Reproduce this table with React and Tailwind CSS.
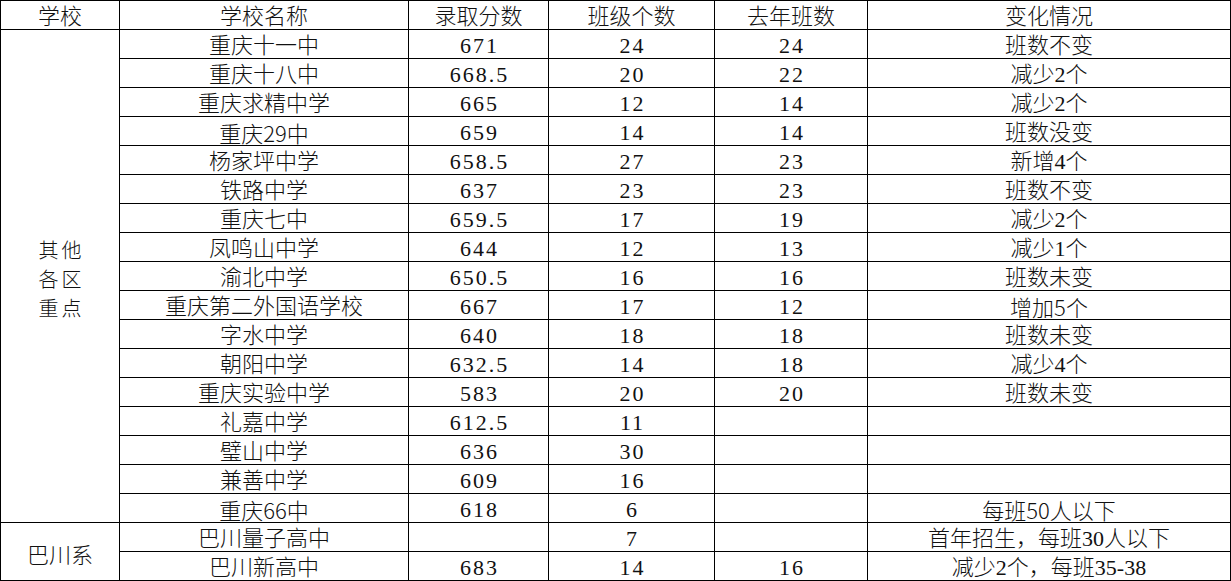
import React from "react";

const S = ({ children }) => <span className="font-['Noto_Sans_CJK_SC',sans-serif]">{children}</span>;

const rows = [
  ["重庆十一中", "671", "24", "24", "班数不变"],
  ["重庆十八中", "668.5", "20", "22", "减少2个"],
  ["重庆求精中学", "665", "12", "14", "减少2个"],
  [<>重庆<S>29</S>中</>, "659", "14", "14", "班数没变"],
  ["杨家坪中学", "658.5", "27", "23", "新增4个"],
  ["铁路中学", "637", "23", "23", "班数不变"],
  ["重庆七中", "659.5", "17", "19", "减少2个"],
  ["凤鸣山中学", "644", "12", "13", "减少1个"],
  ["渝北中学", "650.5", "16", "16", "班数未变"],
  ["重庆第二外国语学校", "667", "17", "12", <>增加<S>5</S>个</>],
  ["字水中学", "640", "18", "18", "班数未变"],
  ["朝阳中学", "632.5", "14", "18", "减少4个"],
  ["重庆实验中学", "583", "20", "20", "班数未变"],
  ["礼嘉中学", "612.5", "11", "", ""],
  ["璧山中学", "636", "30", "", ""],
  ["兼善中学", "609", "16", "", ""],
  [<>重庆<S>66</S>中</>, "618", "6", "", <>每班<S>50</S>人以下</>],
];

const bachuan = [
  ["巴川量子高中", "", "7", "", "首年招生，每班30人以下"],
  ["巴川新高中", "683", "14", "16", "减少2个，每班35-38"],
];

function Cell({ children, num = false }) {
  return (
    <div
      className={
        "bg-white flex justify-center items-start pt-[3px] leading-[25px] whitespace-nowrap " +
        (num ? "font-['Liberation_Serif',serif] tracking-[2px] pl-[2px]" : "")
      }
    >
      <span>{children}</span>
    </div>
  );
}

export default function App() {
  const header = ["学校", "学校名称", "录取分数", "班级个数", "去年班数", "变化情况"];
  return (
    <div className="w-[1231px] h-[581px] bg-white">
      <div className="grid grid-cols-[118px_288px_139px_165px_152px_362px] auto-rows-[28px] gap-px p-px bg-black text-[#111] text-[22px] font-light font-['Liberation_Serif','Noto_Sans_CJK_SC',serif]">
        {header.map((h, i) => (
          <Cell key={"h" + i}>{h}</Cell>
        ))}
        <div className="bg-white row-span-17 flex flex-col items-center pt-[205px] pl-[3px] text-[20px] leading-[29px] tracking-[3px] font-['Noto_Sans_CJK_SC',sans-serif]">
          <span className="block h-[29px]">其他</span>
          <span className="block h-[29px]">各区</span>
          <span className="block h-[29px]">重点</span>
        </div>
        {rows.map((r, ri) => (
          <React.Fragment key={"r" + ri}>
            {r.map((c, ci) => (
              <Cell key={ci} num={ci >= 1 && ci <= 3}>
                {c}
              </Cell>
            ))}
          </React.Fragment>
        ))}
        <div className="bg-white row-span-2 flex items-center justify-center pt-[3px] font-['Noto_Sans_CJK_SC',sans-serif]">
          巴川系
        </div>
        {bachuan.map((r, ri) => (
          <React.Fragment key={"b" + ri}>
            {r.map((c, ci) => (
              <Cell key={ci} num={ci >= 1 && ci <= 3}>
                {c}
              </Cell>
            ))}
          </React.Fragment>
        ))}
      </div>
    </div>
  );
}
